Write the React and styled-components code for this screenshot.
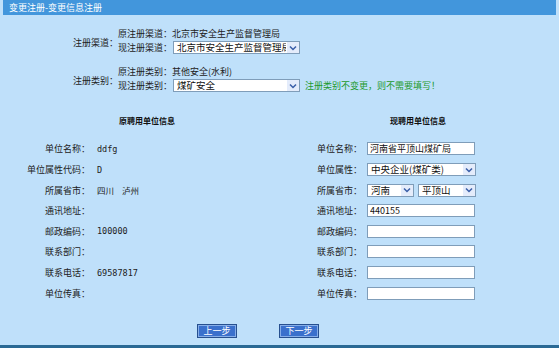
import React from "react";
import styled, { createGlobalStyle } from "styled-components";

const Global = createGlobalStyle`
  html, body { margin: 0; padding: 0; }
  body {
    width: 559px; height: 348px; overflow: hidden;
    background: #bfe0fa;
    font-family: "Noto Sans CJK SC", "DejaVu Sans", sans-serif;
    color: #222;
  }
`;

const Page = styled.div`
  width: 559px;
  height: 348px;
  display: flex;
  flex-direction: column;
  background: #bfe0fa;
`;

const TitleBar = styled.div`
  height: 15px;
  margin: 0 3px;
  padding-left: 6px;
  background: #4296dc;
  color: #fff;
  font-size: 9px;
  line-height: 15px;
`;

const Main = styled.div`
  flex: 1;
  display: flex;
  flex-direction: column;
`;

const RegSection = styled.div`
  margin: 12px 0 0 73px;
  display: flex;
  flex-direction: column;
  gap: 11px;
`;

const RegBlock = styled.div`
  display: flex;
  align-items: center;
`;

const RegLabel = styled.div`
  width: 45px;
  font-size: 9px;
  padding-top: ${(p) => p.$shift || 0}px;
`;

const Lines = styled.div`
  display: flex;
  flex-direction: column;
  gap: 1px;
`;

const Line = styled.div`
  height: 13px;
  display: flex;
  align-items: center;
  font-size: 9px;
  white-space: nowrap;
`;

const SubLabel = styled.span`
  width: 55px;
  flex: none;
`;

const Hint = styled.span`
  margin-left: 5px;
  color: #1d9a2c;
  font-size: 9px;
`;

const SelectWrap = styled.div`
  position: relative;
  width: ${(p) => p.$w}px;
  height: 13px;
  flex: none;
`;

const Select = styled.select`
  appearance: none;
  -webkit-appearance: none;
  width: 100%;
  height: 100%;
  box-sizing: border-box;
  margin: 0;
  padding: 0 13px 0 3px;
  border: 1px solid #7f9db9;
  background: #fff;
  font-family: "Noto Sans CJK SC", sans-serif;
  font-size: 9.5px;
  line-height: 11px;
  color: #111;
  outline: none;
`;

const Arrow = styled.span`
  position: absolute;
  top: 1px;
  right: 1px;
  width: 12px;
  height: 11px;
  background: #e4ecfb;
  display: flex;
  align-items: center;
  justify-content: center;
  pointer-events: none;
`;

const Columns = styled.div`
  margin-top: 22px;
  padding-left: 10px;
  display: grid;
  grid-template-columns: 274px 268px;
`;

const Column = styled.div`
  display: flex;
  flex-direction: column;
`;

const SectionHead = styled.div`
  height: 14px;
  line-height: 14px;
  text-align: center;
  font-size: 8px;
  font-weight: bold;
  color: #111;
  margin-bottom: 10.7px;
`;

const Row = styled.div`
  height: 20.6px;
  display: flex;
  align-items: center;
  font-size: 9px;
`;

const RowLabel = styled.div`
  width: ${(p) => p.$w}px;
  flex: none;
  text-align: right;
  white-space: nowrap;
`;

const Value = styled.div`
  margin-left: 7px;
  font-family: "DejaVu Sans Mono", "Noto Sans CJK SC", monospace;
  font-size: 8.5px;
  word-spacing: 3px;
`;

const Controls = styled.div`
  margin-left: 5px;
  display: flex;
  gap: 4px;
`;

const Input = styled.input`
  width: 108px;
  height: 13px;
  box-sizing: border-box;
  margin: 0;
  padding: 0 2px;
  border: 1px solid #7f9db9;
  background: #fff;
  font-family: "Noto Sans CJK SC", sans-serif;
  font-size: 9px;
  color: #111;
  outline: none;
`;

const ButtonRow = styled.div`
  margin-top: 21px;
  padding-right: 43px;
  display: flex;
  justify-content: center;
  gap: 42px;
`;

const Button = styled.button`
  width: 40px;
  height: 14px;
  margin: 0;
  padding: 0;
  box-sizing: border-box;
  border: 1px solid #27508f;
  box-shadow: inset 0 0 0 1px #86aee8;
  background: #3a70cc;
  color: #fff;
  font-family: "Noto Sans CJK SC", sans-serif;
  font-size: 9px;
  line-height: 12px;
`;

const BottomLine = styled.div`
  height: 3px;
  background: #2a6994;
`;

const Chevron = () => (
  <svg width="8" height="6" viewBox="0 0 8 6">
    <path d="M1 1.5 L4 4.5 L7 1.5" fill="none" stroke="#3a5fa8" strokeWidth="1.5" />
  </svg>
);

const Dropdown = ({ w, value }) => (
  <SelectWrap $w={w}>
    <Select defaultValue={value}>
      <option>{value}</option>
    </Select>
    <Arrow>
      <Chevron />
    </Arrow>
  </SelectWrap>
);

const leftRows = [
  ["单位名称：", "ddfg"],
  ["单位属性代码：", "D"],
  ["所属省市：", "四川 泸州"],
  ["通讯地址：", ""],
  ["邮政编码：", "100000"],
  ["联系部门：", ""],
  ["联系电话：", "69587817"],
  ["单位传真：", ""],
];

const rightInputs = [
  ["邮政编码：", ""],
  ["联系部门：", ""],
  ["联系电话：", ""],
  ["单位传真：", ""],
];

export default function App() {
  return (
    <Page>
      <Global />
      <TitleBar>变更注册-变更信息注册</TitleBar>
      <Main>
        <RegSection>
          <RegBlock>
            <RegLabel $shift={3}>注册渠道：</RegLabel>
            <Lines>
              <Line>原注册渠道：北京市安全生产监督管理局</Line>
              <Line>
                <SubLabel>现注册渠道：</SubLabel>
                <Dropdown w={127} value="北京市安全生产监督管理局" />
              </Line>
            </Lines>
          </RegBlock>
          <RegBlock>
            <RegLabel $shift={3}>注册类别：</RegLabel>
            <Lines>
              <Line>原注册类别：其他安全(水利)</Line>
              <Line>
                <SubLabel>现注册类别：</SubLabel>
                <Dropdown w={127} value="煤矿安全" />
                <Hint>注册类别不变更，则不需要填写！</Hint>
              </Line>
            </Lines>
          </RegBlock>
        </RegSection>

        <Columns>
          <Column>
            <SectionHead>原聘用单位信息</SectionHead>
            {leftRows.map(([label, value]) => (
              <Row key={label}>
                <RowLabel $w={80}>{label}</RowLabel>
                <Value>{value}</Value>
              </Row>
            ))}
          </Column>
          <Column>
            <SectionHead>现聘用单位信息</SectionHead>
            <Row>
              <RowLabel $w={78}>单位名称：</RowLabel>
              <Controls>
                <Input defaultValue="河南省平顶山煤矿局" />
              </Controls>
            </Row>
            <Row>
              <RowLabel $w={78}>单位属性：</RowLabel>
              <Controls>
                <Dropdown w={109} value="中央企业(煤矿类)" />
              </Controls>
            </Row>
            <Row>
              <RowLabel $w={78}>所属省市：</RowLabel>
              <Controls>
                <Dropdown w={47} value="河南" />
                <Dropdown w={58} value="平顶山" />
              </Controls>
            </Row>
            <Row>
              <RowLabel $w={78}>通讯地址：</RowLabel>
              <Controls>
                <Input defaultValue="440155" />
              </Controls>
            </Row>
            {rightInputs.map(([label, value]) => (
              <Row key={label}>
                <RowLabel $w={78}>{label}</RowLabel>
                <Controls>
                  <Input defaultValue={value} />
                </Controls>
              </Row>
            ))}
          </Column>
        </Columns>

        <ButtonRow>
          <Button type="button">上一步</Button>
          <Button type="button">下一步</Button>
        </ButtonRow>
      </Main>
      <BottomLine />
    </Page>
  );
}
